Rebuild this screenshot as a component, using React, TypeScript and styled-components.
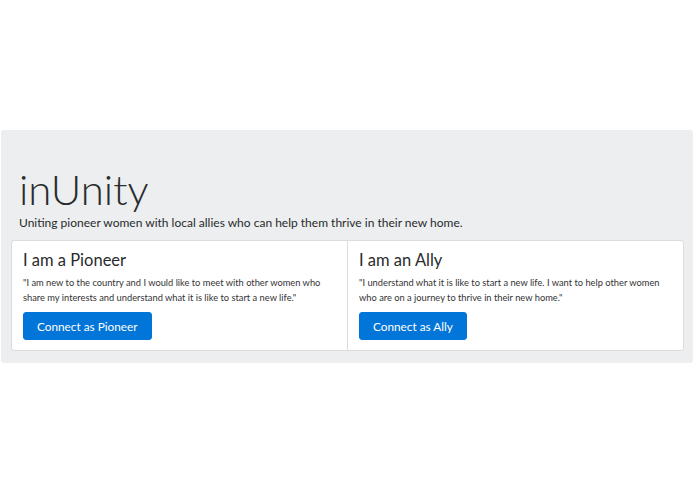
import React from "react";
import styled, { createGlobalStyle } from "styled-components";

const GlobalStyle = createGlobalStyle`
  html, body {
    margin: 0;
    padding: 0;
    background: #ffffff;
    font-family: Lato, "Open Sans", sans-serif;
    color: #292b2c;
  }
  * {
    box-sizing: border-box;
  }
`;

const cards = [
  {
    title: "I am a Pioneer",
    quote:
      "\"I am new to the country and I would like to meet with other women who share my interests and understand what it is like to start a new life.\"",
    button: "Connect as Pioneer",
  },
  {
    title: "I am an Ally",
    quote:
      "\"I understand what it is like to start a new life. I want to help other women who are on a journey to thrive in their new home.\"",
    button: "Connect as Ally",
  },
];

const App = () => {
  return (
    <Page>
      <GlobalStyle />
      <Jumbotron>
        <Title>inUnity</Title>
        <Lead>
          Uniting pioneer women with local allies who can help them thrive in
          their new home.
        </Lead>
        <CardGroup>
          {cards.map((card) => (
            <Card key={card.title}>
              <CardTitle>{card.title}</CardTitle>
              <CardText>{card.quote}</CardText>
              <Button>{card.button}</Button>
            </Card>
          ))}
        </CardGroup>
      </Jumbotron>
    </Page>
  );
};

export default App;

const Page = styled.div`
  width: 695px;
  height: 494px;
  padding-top: 130px;
  padding-left: 1px;
`;

const Jumbotron = styled.div`
  width: 692px;
  height: 233px;
  background-color: #eceeef;
  border-radius: 3px;
  padding: 36px 9px 0 10px;
`;

const Title = styled.h1`
  margin: 0 0 0 8px;
  font-size: 42px;
  font-weight: 300;
  line-height: 46px;
  color: #292b2c;
`;

const Lead = styled.p`
  margin: 3px 0 0 8px;
  font-size: 12px;
  line-height: 16px;
  font-weight: 400;
  color: #292b2c;
`;

const CardGroup = styled.div`
  display: flex;
  margin-top: 9px;
  width: 673px;
`;

const Card = styled.div`
  flex: 1;
  background: #ffffff;
  border: 1px solid #dcdcdc;
  padding: 9px 11px 10px;
  &:first-child {
    border-right: none;
    border-radius: 3px 0 0 3px;
  }
  &:last-child {
    border-radius: 0 3px 3px 0;
  }
`;

const CardTitle = styled.h4`
  margin: 0;
  font-size: 16.5px;
  font-weight: 400;
  line-height: 20px;
  color: #292b2c;
`;

const CardText = styled.p`
  margin: 5px 0 0;
  font-size: 9.3px;
  line-height: 15px;
  color: #333;
`;

const Button = styled.button`
  display: block;
  margin-top: 7px;
  height: 28px;
  padding: 0 13px;
  background-color: #0275d8;
  border: 1px solid #0275d8;
  border-radius: 3px;
  color: #ffffff;
  font-family: Lato, "Open Sans", sans-serif;
  font-size: 11.8px;
  cursor: pointer;
`;
